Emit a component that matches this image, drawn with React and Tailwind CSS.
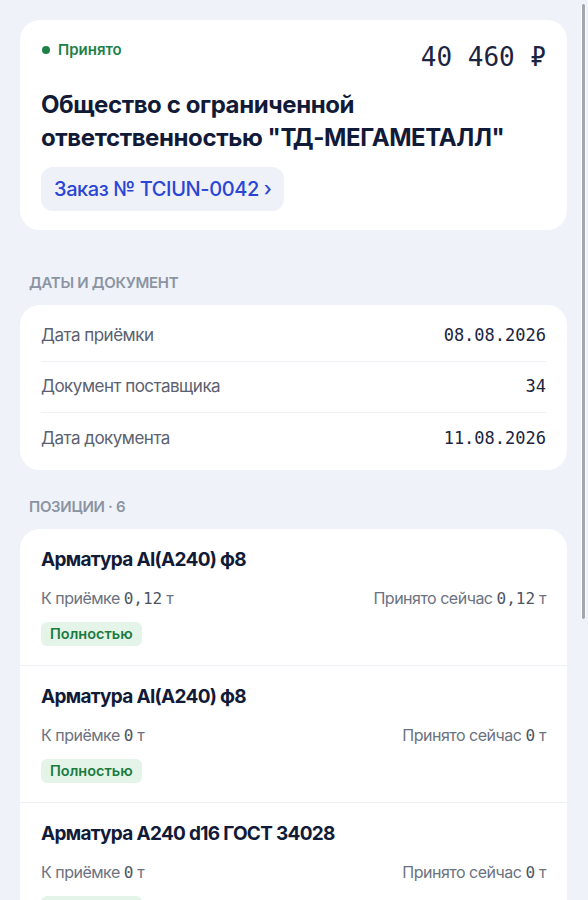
const mono = "font-['DejaVu_Sans_Mono',monospace]";

const dates = [
  { label: "Дата приёмки", value: "08.08.2026" },
  { label: "Документ поставщика", value: "34" },
  { label: "Дата документа", value: "11.08.2026" },
];

const items = [
  { name: "Арматура AI(A240) ф8", due: "0,12", now: "0,12" },
  { name: "Арматура AI(A240) ф8", due: "0", now: "0" },
  { name: "Арматура A240 d16 ГОСТ 34028", due: "0", now: "0" },
  { name: "Арматура A240 d16 ГОСТ 34028", due: "0", now: "0" },
];

function SectionTitle({ children, className = "" }) {
  return (
    <div
      className={`px-[9px] pb-[12px] text-[15px] font-semibold uppercase tracking-[-0.3px] text-[#8b93a3] leading-[20px] ${className}`}
    >
      {children}
    </div>
  );
}

function Item({ item }) {
  return (
    <div className="px-[21px] pt-[19px] pb-[19px] border-b border-[#edf0f4] last:border-b-0">
      <div className="text-[19px] font-bold leading-[24px] text-[#111a37] tracking-[-0.7px]">
        {item.name}
      </div>
      <div className="mt-[14px] flex items-center justify-between text-[16px] leading-[24px] text-[#6b7280] tracking-[-0.5px]">
        <span>
          К приёмке <span className={`${mono} tracking-normal text-[#4b5563]`}>{item.due}</span> т
        </span>
        <span>
          Принято сейчас <span className={`${mono} tracking-normal text-[#4b5563]`}>{item.now}</span> т
        </span>
      </div>
      <div className="mt-[11px] flex">
        <span className="rounded-[6px] bg-[#e4f4e9] px-[9px] h-[24px] flex items-center text-[14.5px] font-semibold text-[#1b7a40]">
          Полностью
        </span>
      </div>
    </div>
  );
}

export default function App() {
  return (
    <div className="relative h-screen overflow-hidden bg-[#eff3f9] font-['Inter',sans-serif]">
      <div className="pt-[20px] pl-[20px] pr-[21px]">
        {/* header card */}
        <div className="rounded-[20px] bg-white px-[21px] pt-[20px] pb-[19px]">
          <div className="flex items-start justify-between">
            <div className="flex items-center gap-[8px] text-[15px] font-semibold text-[#1d8047] leading-[20px]">
              <span className="ml-[1px] h-[8px] w-[8px] rounded-full bg-[#1d8047]" />
              Принято
            </div>
            <div className={`${mono} text-[26px] leading-[32px] text-[#1b2440] font-medium mt-[1px]`}>
              40 460 ₽
            </div>
          </div>
          <div className="mt-[15px] text-[24px] font-bold leading-[33px] text-[#111a37] tracking-[-0.4px]">
            Общество с ограниченной
            <br />
            ответственностью "ТД-МЕГАМЕТАЛЛ"
          </div>
          <div className="mt-[13px] flex">
            <div className="h-[44px] rounded-[12px] bg-[#eef1f7] px-[13px] flex items-center text-[20px] font-medium text-[#2b45d4] tracking-[-0.4px]">
              Заказ № TCIUN-0042 ›
            </div>
          </div>
        </div>

        <SectionTitle className="pt-[43px]">Даты и документ</SectionTitle>
        <div className="rounded-[20px] bg-white px-[21px] py-[6px]">
          {dates.map((d, i) => (
            <div
              key={i}
              className="h-[51px] flex items-center justify-between border-b border-[#edf0f4] last:border-b-0"
            >
              <span className="text-[17px] text-[#5b6170] tracking-[-0.5px]">{d.label}</span>
              <span className={`${mono} text-[17px] text-[#1b2440]`}>{d.value}</span>
            </div>
          ))}
        </div>

        <SectionTitle className="pt-[27px]">Позиции · 6</SectionTitle>
        <div className="rounded-t-[20px] bg-white">
          {items.map((it, i) => (
            <Item key={i} item={it} />
          ))}
        </div>
      </div>

      {/* scroll indicator */}
      <div className="absolute right-[2px] top-[3px] h-[617px] w-[5px] rounded-full bg-[#a3a6ad] border border-white" />
    </div>
  );
}
